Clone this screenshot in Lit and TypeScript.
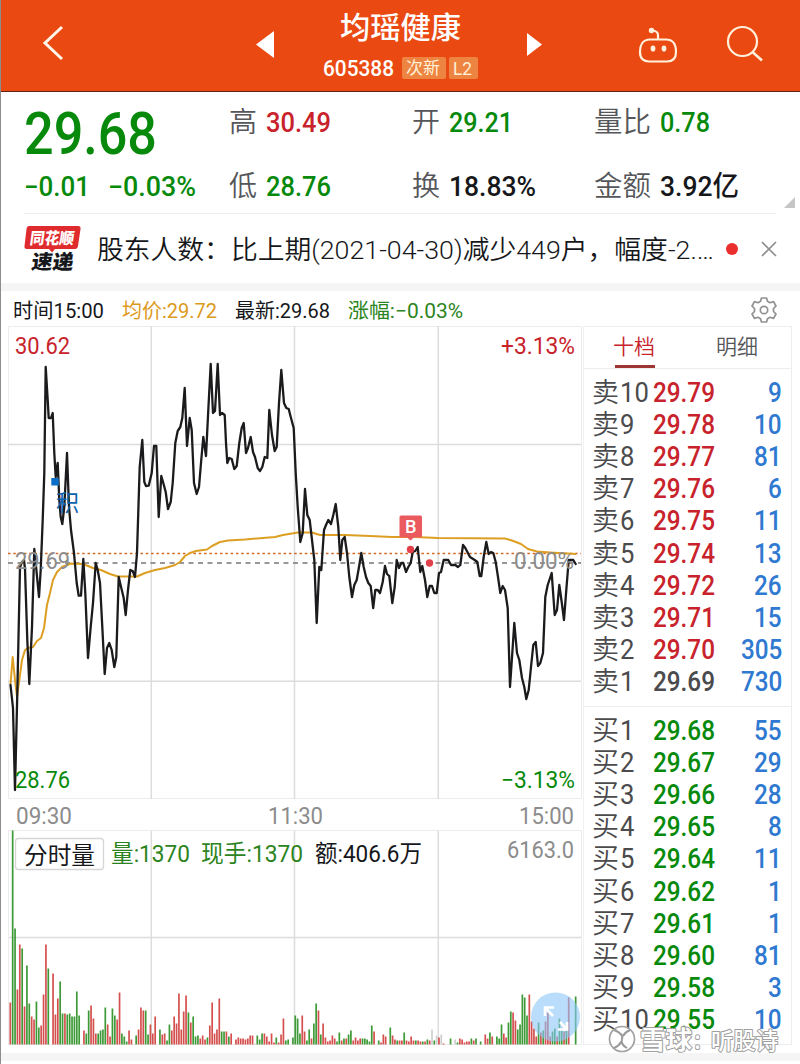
import { LitElement, html, svg, css } from "lit";
import { customElement } from "lit/decorators.js";

const CAP = 0.711;

/** Inline text run with a fixed advance width; its box is as tall as a capital. */
const fit = (text: string, width: number, size: number, cls = "") => {
  const h = Math.round(size * CAP);
  return html`<svg class="fit ${cls}" width=${width} height=${h}>
    <text x="-1" y=${h} font-size=${size} textLength=${width} lengthAdjust="spacingAndGlyphs">${text}</text>
  </svg>`;
};

const label = (
  text: string, x: number, y: number, width: number, size: number, cls: string,
) => svg`<text class=${cls} x=${x} y=${y} font-size=${size} textLength=${width} lengthAdjust="spacingAndGlyphs">${text}</text>`;

const PRICE = `10.5,685 13,708 15,790 17.3,693 20,567 22,562 24,560 25,569 27.3,640 29.3,684 32,627 34.3,549 36,566 39,597
40.7,570 42.7,520 44.3,473 45.7,367 47.7,400 48.7,418 51,418 52.7,413 54.3,453 55.7,477 57.7,463 59.3,500 60.7,517
62.3,524 64.3,507 67,453 69,507 71,530 74,553 76.7,583 78.7,595.7 81,595.7 83.3,559 85.3,593 88,658 90.7,627 93,603
95.7,563 97.7,570 100,583 102.3,627 104.7,674 107,648 109.3,643 111.7,650 114.3,667 116.3,657 118.7,577 121.3,588
123.7,598 125.7,615 128,590 130.3,570 132.7,571 135,577 137,553 139.7,467 142.3,440 144.3,482 146,486 148.7,485.7
151.7,473 154,446 156.3,446 158.7,517 161.3,476 163.3,483 165.7,492 168,509 170.7,502 172.7,483 175.3,443 177.7,431
180.3,427 182.3,418 184.7,388 187,446 189.7,418 191.7,430 194,483 196.7,494 199,487 201,463 203.3,437 206,456
208.3,410 210.7,364 213,413 215,411 217.7,364 220,415 222,413 224.7,415 226,443 227.3,463 229.3,458 231.7,459
234.3,469 236.7,466 239.3,443 241.7,428 243.7,423 246,453 248,448 250.7,437 253,452 255,457 257.7,468 260,471
262.3,467 264.7,457 267.3,458 269.3,410 272,435 274.7,451 276.7,447 279,403 281.3,370 284,403 286.3,408 288.7,409
291,418 293.7,428 295.7,473 297.7,507 300.3,542 302.7,533 305,489 307.3,515 309.7,520 312,540 314.3,560 316.7,623
319.3,567 321.3,570 324,530 326,525 328.3,520 331,524 333.3,515 335.7,504 338.3,527 340.3,560 342.3,540 344.7,537
347,553 349.3,577 352,597 354.3,585 356.7,580 359,567 361.3,553 363.7,567 366,577 368.3,583 370.7,586 373.2,608
375.3,590 377.7,590 380,593 382.7,582 385,566 387,574 389.3,576 392.3,603 394.7,587 396.7,560 399,568 401.3,563
403.3,563 406,572 408.3,567 410.7,563 412.7,552 415.3,551 417.7,547 420.3,572 422.3,566 425,580 427.3,597 429.7,586
432,586 434.3,593 436.7,593 439,573 441,572 443.7,560 448.3,560 451,565 455.3,565 458,567 460.3,565 463,545
465.3,548 470,557 474.7,560 477.3,562 479.7,576 481.3,576 483.7,557 486.3,542 488.7,554 491,552 493.3,553 495.7,562
498,577 500.3,593 502.7,586 505,590 507.7,608 510,687 512.3,653 514.3,623 517,653 519.3,660 522,678 524.3,687
526.3,699 528.7,690 531,667 533.3,645 535.7,642 538,666 540.3,663 543,653 545.3,597 547.7,585 551.7,573 554.7,615
557,610 559.3,585 561.7,602 564,620 566.3,590 568.7,560 573.3,560 575.7,564`;

const AVERAGE = `10.5,684 12.7,657 15,680 17,697 19,682 22,660 25,650 28,648 33,647 37,641 41,638 44,628 47,605 50,593
53,580 57,572 62,567 71,563.5 83,564 93,568 101,570 110,574 118,576.5 137,576.5 145,573 155,570 165,568 175,565
180,562 185,556 190,553 196,551 207,549.5 212,546 220,542 228,540.5 245,539.5 275,537 283,535 298,532.5 312,532.5
320,535 345,535 370,536 392,537 415,537 438,538 505,538.5 512,540.5 521,544 528,549 537,551.5 550,552.5 576,554`;

// One entry per minute: direction (r rise, g fall, l flat) and bar height.
const VOLUME = `r42 g214 g116 r55 r100 g96 r38 g79 g41 r28 r25 g43 g17 r19 r50 r100 g76 l0 r71 r30 r46 g63 g31 r31 g30 g31 g28
g28 g53 g29 l0 r14 g11 g34 r39 r26 r11 g11 g14 g15 g37 r20 r8 g36 g29 r25 r52 g11 g8 g3 r14 r5 l0 g9 r15 r37 r34 g34
g10 r20 r11 r28 l0 g15 r10 r11 g4 g20 r14 r28 r21 r51 r15 r33 r49 g32 r22 g28 g8 g9 r6 r9 r5 g7 r19 r42 r11 r15 r46
g13 g13 r13 g8 r11 l0 r5 r7 r6 r6 r5 r6 r9 r9 l1 g9 g5 g11 r11 r8 r3 r11 r2 g7 r2 r10 r26 g4 g5 l0 g7 g29 g26 g11 r29
r13 g4 g15 r6 g21 g41 r34 g10 r21 r7 r3 r4 r9 r6 g3 g12 r4 g6 r6 g10 g14 r4 r7 r4 r6 g6 g6 g5 g3 g19 r13 l0 g4 r2 r10
r8 l0 g17 r9 r5 g4 r4 r4 g12 r4 r3 r8 r4 g4 r4 r3 g3 r3 g5 r4 l15 g4 l9 r7 l10 r1 l0 l0 g6 l0 l5 g2 r6 r5 r2 r3 r3 g6
r4 g6 l0 g3 l0 r10 r6 g12 r8 l0 g8 g6 g20 r11 r7 g22 g33 r32 r24 g15 g20 g50 g47 g29 r50 r23 r16 r8 g22 r12 g14 r23
r32 r8 g13 g16 r8 g26 g16 r13 g14 r47 l0 l0 g48`.split(/\s+/);

const barX = (i: number) => (i <= 120 ? 10.3 + i * 2.375 : 295.3 + (i - 120) * 2.317);

type Level = [string, string, string, string];
const SELL: Level[] = [
  ["10", "29.79", "9", "red"], ["9", "29.78", "10", "red"], ["8", "29.77", "81", "red"],
  ["7", "29.76", "6", "red"], ["6", "29.75", "11", "red"], ["5", "29.74", "13", "red"],
  ["4", "29.72", "26", "red"], ["3", "29.71", "15", "red"], ["2", "29.70", "305", "red"],
  ["1", "29.69", "730", "dim"],
];
const BUY: Level[] = [
  ["1", "29.68", "55", "green"], ["2", "29.67", "29", "green"], ["3", "29.66", "28", "green"],
  ["4", "29.65", "8", "green"], ["5", "29.64", "11", "green"], ["6", "29.62", "1", "green"],
  ["7", "29.61", "1", "green"], ["8", "29.60", "81", "green"], ["9", "29.58", "3", "green"],
  ["10", "29.55", "10", "green"],
];

@customElement("app-root")
export class AppRoot extends LitElement {
  static styles = css`
    :host { display: block; width: 800px; height: 1064px; overflow: hidden; background: #fff;
      font-family: Roboto, "Noto Sans CJK SC", sans-serif; color: #16171a; position: relative; }
    * { box-sizing: border-box; }
    svg { display: block; flex: none; overflow: visible; }
    text { fill: currentColor; white-space: pre; }
    .m { font-weight: 500; }
    .l { font-weight: 350; }
    .red { color: #c8232c; }
    .green { color: #078a0b; }
    .leaf { color: #2c8420; }
    .gold { color: #dc9a1c; }
    .blue { color: #2f7ad0; }
    .dim { color: #4b4b4d; }
    .key { color: #55565a; }
    .axis { color: #8c8c8c; }
    .ink { color: #0d62ad; }
    .white { color: #fff; }

    .page { border-left: 1px solid #8d8d8d; height: 1064px; }
    header { height: 92px; background: #ea4a12; border-bottom: 1px solid #5b2413; color: #fff;
      display: grid; grid-template-columns: 255px 22px 246px 20px 1fr; }
    .back { padding: 25px 0 0 41px; }
    .prev { padding-top: 31px; }
    .next { padding: 33px 0 0 2px; }
    .name { display: flex; flex-direction: column; align-items: center; padding-top: 17px; }
    .sub { display: flex; align-items: center; gap: 3px; margin-top: 19px; height: 22px; }
    .sub .code { margin-right: 4px; }
    .tag { height: 22px; background: #ee8442; border-radius: 2px; display: flex; align-items: center;
      justify-content: center; color: #fff0d8; }
    .new { width: 44px; }
    .lv { width: 29px; }
    .tools { display: flex; gap: 49px; padding: 26px 0 0 94px; }

    .quote { height: 121px; display: grid; grid-template-columns: 205px 183px 182px 1fr; padding-left: 24px; }
    .last { padding-top: 20px; display: flex; flex-direction: column; gap: 23px; }
    .chg { display: flex; gap: 18px; }
    .col { padding-top: 3px; display: flex; flex-direction: column; gap: 10px; }
    .stat { height: 54px; display: flex; align-items: center; gap: 9px; }
    .corner { position: absolute; left: 784px; top: 197px; }

    .news { height: 70px; margin-left: 23px; width: 752px; border-top: 1px solid #ececec; display: flex;
      align-items: center; }
    .news .head { margin: 2px 0 0 17px; }
    .brand { font-weight: 900; }
    .dot { width: 12px; height: 12px; border-radius: 50%; background: #ea2d2d; margin-left: 11px; }
    .news .x { margin-left: 24px; }
    .strip { height: 8px; background: #f5f5f6; }

    .info { height: 35px; padding: 3px 23px 0 13px; display: flex; align-items: center; }
    .info .g { margin-right: 18px; }
    .info .gear { margin-left: auto; }

    .board { display: grid; grid-template-columns: 582px 209px; }
    .times { height: 31px; padding: 2px 8px 0 16px; display: flex; justify-content: space-between; align-items: center; }
    .grid { stroke: #dcdcdc; stroke-width: 1.5; }
    .edge { stroke: #ececec; stroke-width: 1; }

    .depth { height: 719px; border: 1px solid #ededed; border-left-color: #f1f1f1; }
    .tabs { height: 42px; border-bottom: 1px solid #ededed; display: grid; grid-template-columns: 101px 106px; }
    .tab { display: flex; flex-direction: column; align-items: center; padding-top: 12px; gap: 11px; }
    .tab .line { width: 40px; height: 3px; background: #9f3535; }
    .levels { height: 338px; padding-top: 7px; border-bottom: 1px solid #ededed; }
    .levels.buy { border: 0; }
    .level { height: 32.2px; display: grid; grid-template-columns: 28px 33px 62px 1fr; align-items: center;
      padding: 0 8px 0 9px; }
    .level .v { justify-self: end; }
    .foot { height: 8px; }

    .mark { position: absolute; left: 606px; top: 1020px; }
    .bold { font-weight: 700; }
    .shade { color: #a6a6a6; }
  `;

  private level(side: string, [n, price, vol, tone]: Level) {
    return html`<div class="level">
      ${fit(side, 27, 27, "dim l")}
      ${fit(n, n.length * 14.4, 27, "dim")}
      ${fit(price, 62, 27, "m " + tone)}
      ${fit(vol, vol.length * 13.8, 27, "m v blue")}
    </div>`;
  }

  private header() {
    return html`<header>
      <div class="back"><svg width="22" height="36" fill="none" stroke="#fff6ea" stroke-width="3"><path d="M20 2 3 18 20 34" /></svg></div>
      <div class="prev"><svg width="18" height="27" fill="#fff"><path d="M0 13.5 18 0V27Z" /></svg></div>
      <div class="name">
        ${fit("均瑶健康", 121, 30, "m")}
        <div class="sub">
          <span class="code">${fit("605388", 71, 22.5, "m")}</span>
          <div class="tag new">${fit("次新", 34, 17)}</div>
          <div class="tag lv">${fit("L2", 19, 19)}</div>
        </div>
      </div>
      <div class="next"><svg width="16" height="24" fill="#fff"><path d="M16 11.5 1 0V23Z" /></svg></div>
      <div class="tools">
        <svg width="40" height="38" fill="none" stroke="#fff0dc" stroke-width="2.200">
          <path d="M12 13.500H28C36 13.500 38 20 38 26C38 33 34 35.500 29 35.500H11C6 35.500 2 33 2 26C2 20 4 13.500 12 13.500Z" />
          <path d="M20 13.500V9Q20 5 14 4.500" />
          <circle cx="13.500" cy="4.500" r="1.600" fill="#fff0dc" />
          <ellipse cx="15" cy="22.500" rx="1.300" ry="2" fill="#fff" />
          <ellipse cx="26" cy="22.500" rx="1.300" ry="2" fill="#fff" />
        </svg>
        <svg width="38" height="38" fill="none" stroke="#fff0dc" stroke-width="2.200">
          <circle cx="15.500" cy="15.500" r="14.500" /><path d="M25.500 26 35 34.500" stroke-width="2.600" />
        </svg>
      </div>
    </header>`;
  }

  private quote() {
    return html`<section class="quote">
      <div class="last">
        ${fit("29.68", 133, 59, "m green")}
        <div class="chg">${fit("−0.01", 66, 27, "m green")}${fit("−0.03%", 88, 27, "m green")}</div>
      </div>
      <div class="col">
        <div class="stat">${fit("高", 28, 28, "l key")}${fit("30.49", 65, 28, "m red")}</div>
        <div class="stat">${fit("低", 28, 28, "l key")}${fit("28.76", 65, 28, "m green")}</div>
      </div>
      <div class="col">
        <div class="stat">${fit("开", 28, 28, "l key")}${fit("29.21", 64, 28, "m green")}</div>
        <div class="stat">${fit("换", 28, 28, "l key")}${fit("18.83%", 87, 28, "m")}</div>
      </div>
      <div class="col">
        <div class="stat">${fit("量比", 57, 28, "l key")}${fit("0.78", 50, 28, "m green")}</div>
        <div class="stat">${fit("金额", 57, 28, "l key")}${fit("3.92亿", 79, 28, "m")}</div>
      </div>
    </section>
    <svg class="corner" width="11" height="11"><path d="M11 0V11H0Z" fill="#c6c6c6" /></svg>`;
  }

  private news() {
    return html`<section class="news">
      <svg class="logo" width="57" height="48">
        <path d="M5 1H54Q57 1 56.500 4L54 21Q53.500 24 51 24H31L28 27.500 25 24H3Q0 24 .5 21L2.500 4Q3 1 5 1Z" fill="#df2b2e" />
        <g transform="skewX(-8)">
          ${label("同花顺", 8, 19, 44, 16, "brand white")}
          ${label("速递", 13, 44, 42, 20, "brand")}
        </g>
      </svg>
      <div class="head">${fit("股东人数：比上期(2021-04-30)减少449户，幅度-2.…", 617, 26.5, "l")}</div>
      <div class="dot"></div>
      <svg class="x" width="14" height="14" stroke="#8c8c8c" stroke-width="1.600"><path d="M0 0 14 14M14 0 0 14" /></svg>
    </section>`;
  }

  private info() {
    return html`<section class="info">
      <span class="g">${fit("时间15:00", 91, 20.5)}</span>
      <span class="g">${fit("均价:29.72", 95, 20.5, "gold")}</span>
      <span class="g">${fit("最新:29.68", 95, 20.5)}</span>
      ${fit("涨幅:−0.03%", 115, 20.5, "leaf")}
      <svg class="gear" width="26" height="26" fill="none" stroke="#919191" stroke-width="1.700" stroke-linejoin="round">
        <path d="M10.500 1H15.500L16.500 4.300 19 5.700 22.500 4.600 25 9 22.500 11.500V14.500L25 17 22.500 21.400 19 20.300 16.500 21.700 15.500 25H10.500L9.500 21.700 7 20.300 3.500 21.400 1 17 3.500 14.500V11.500L1 9 3.500 4.600 7 5.700 9.500 4.300Z" />
        <circle cx="13" cy="13" r="3.700" />
      </svg>
    </section>`;
  }

  private priceChart() {
    return html`<svg width="582" height="473" viewBox="1 326 582 473" fill="none">
      <path class="edge" d="M8.500 799V326.500H581.500V799M8 798.500H581" />
      <path class="grid" d="M151.300 326V799M294.500 326V799M438.300 326V799M8 444.500H581M8 681.300H581" />
      <path d="M8 553.500H581" stroke="#d2691e" stroke-width="1.500" stroke-dasharray="2.500 2.800" />
      <path d="M8 563H581" stroke="#77777b" stroke-width="1.300" stroke-dasharray="5 4.500" />
      <polyline points=${AVERAGE} stroke="#dc9f24" stroke-width="2" stroke-linejoin="round" />
      <polyline points=${PRICE} stroke="#1b1b1d" stroke-width="2.300" stroke-linejoin="round" stroke-linecap="round" />
      ${label("29.69", 15, 568.5, 55, 23.5, "axis")}
      ${label("0.00%", 514, 568.5, 60, 23.5, "axis")}
      ${label("30.62", 15, 354, 55, 23.5, "red")}
      ${label("+3.13%", 501, 354, 74, 23.5, "red")}
      ${label("28.76", 15, 788, 55, 23.5, "green")}
      ${label("−3.13%", 501, 788, 74, 23.5, "green")}
      <rect x="51.300" y="478" width="7.500" height="7.500" fill="#0b6fc8" />
      ${label("积", 56, 511, 23, 23, "ink")}
      <path d="M401 515.500H420.500Q422 515.500 422 517V536Q422 537.500 420.500 537.500H414L410.500 540.500 407 537.500H401Q399.500 537.500 399.500 536V517Q399.500 515.500 401 515.500Z" fill="#ea5a5f" />
      ${label("B", 405, 532.5, 11.5, 17.5, "m white")}
      <circle cx="410.500" cy="549.500" r="3.700" fill="#e2414c" />
      <circle cx="429.500" cy="563" r="3.700" fill="#e2414c" />
    </svg>`;
  }

  private volumeChart() {
    const fill: Record<string, string> = { r: "#d4504f", g: "#3d9a37", l: "#cfcfcf" };
    return html`<svg width="582" height="215" viewBox="1 830 582 215" fill="none">
      <path class="grid" d="M151.300 830V1044M294.500 830V1044M438.300 830V1044M8 937.500H581" />
      <path class="edge" d="M8.500 830V1044.500H581.500V830.500H8" />
      ${VOLUME.map((b, i) => {
        const h = Number(b.slice(1));
        return svg`<rect x=${barX(i) - 0.85} y=${1044.5 - h} width="1.700" height=${h} fill=${fill[b[0]]} />`;
      })}
      <rect x="15.500" y="838.500" width="88" height="31" rx="3" fill="#fff" stroke="#d6d6d6" stroke-width="1.300" />
      ${label("分时量", 24, 863.5, 71, 23.5, "")}
      ${label("量:1370", 111, 861.5, 79, 23.5, "leaf")}
      ${label("现手:1370", 201, 861.5, 102, 23.5, "leaf")}
      ${label("额:406.6万", 315, 861.5, 107, 23.5, "")}
      ${label("6163.0", 507, 858, 67, 24, "axis")}
      <circle cx="555.500" cy="1017" r="24.500" fill="#8cc6f8" fill-opacity=".6" />
      <path d="M545 1016V1007.500H554M546 1008.500 553 1016M567 1022V1029.500H558M566 1028.500 560 1022" stroke="#fff" stroke-width="2.600" />
    </svg>`;
  }

  render() {
    return html`<div class="page">
      ${this.header()} ${this.quote()} ${this.news()}
      <div class="strip"></div>
      ${this.info()}
      <main class="board">
        <div>
          ${this.priceChart()}
          <div class="times">${fit("09:30", 56, 23, "axis")}${fit("11:30", 55, 23, "axis")}${fit("15:00", 55, 23, "axis")}</div>
          ${this.volumeChart()}
        </div>
        <aside class="depth">
          <div class="tabs">
            <div class="tab">${fit("十档", 42, 21, "red l")}<div class="line"></div></div>
            <div class="tab">${fit("明细", 42, 21, "key l")}</div>
          </div>
          <div class="levels">${SELL.map((l) => this.level("卖", l))}</div>
          <div class="levels buy">${BUY.map((l) => this.level("买", l))}</div>
        </aside>
      </main>
      <div class="foot"></div>
      <div class="strip"></div>
      <svg class="mark" width="174" height="36" viewBox="606 1020 174 36" fill="none">
        <circle cx="622" cy="1039" r="12.500" fill="#fff" fill-opacity=".6" stroke="#a2a2a2" stroke-width="1.700" />
        <path d="M614 1030Q624 1034 622 1039T627 1048M630 1030Q625 1032 623 1036M614 1048Q619 1046 621 1042" stroke="#9a9a9a" stroke-width="2" />
        <g class="white" stroke="#a0a0a0" stroke-width="2" stroke-linejoin="round" paint-order="stroke">
          ${label("雪球", 640, 1048.5, 52, 24.5, "bold white")}
          ${label("：", 693, 1048.5, 18, 20, "bold white")}
          ${label("听股诗", 711, 1048.5, 67, 22.5, "m white")}
        </g>
      </svg>
    </div>`;
  }
}
